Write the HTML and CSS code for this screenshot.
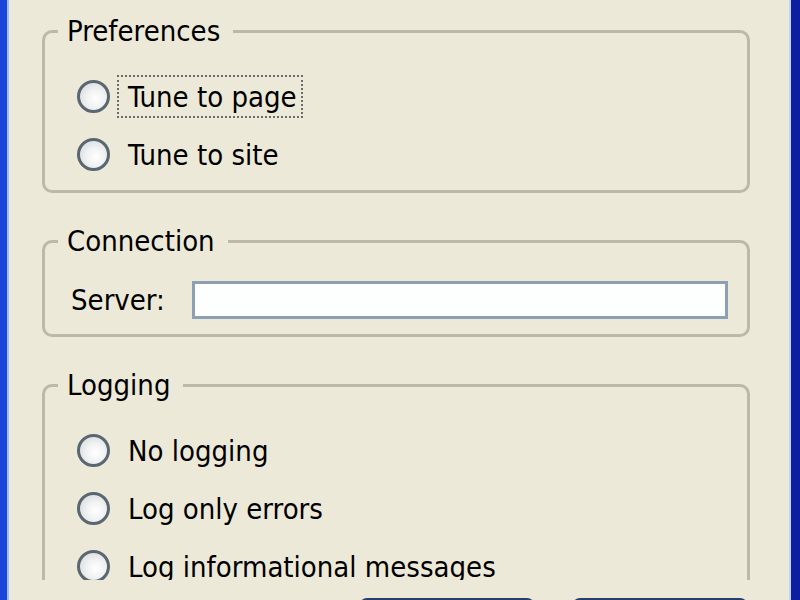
FILE: index.html
```html
<!DOCTYPE html>
<html lang="en">
<head>
  <meta charset="UTF-8" />
  <title>Options</title>
  <link rel="stylesheet" href="styles.css">
</head>
<body>
  <div class="window">
    <div class="frame">
      <div class="scroll">

        <fieldset class="group">
          <legend>Preferences</legend>
          <label class="option">
            <input type="radio" name="tune" class="radio">
            <span class="caption focused">Tune to page</span>
          </label>
          <label class="option">
            <input type="radio" name="tune" class="radio">
            <span class="caption">Tune to site</span>
          </label>
        </fieldset>

        <fieldset class="group connection">
          <legend>Connection</legend>
          <div class="field-row">
            <label class="field-label" for="server">Server:</label>
            <input type="text" id="server" class="field">
          </div>
        </fieldset>

        <fieldset class="group">
          <legend>Logging</legend>
          <label class="option">
            <input type="radio" name="log" class="radio">
            <span class="caption">No logging</span>
          </label>
          <label class="option">
            <input type="radio" name="log" class="radio">
            <span class="caption">Log only errors</span>
          </label>
          <label class="option">
            <input type="radio" name="log" class="radio">
            <span class="caption">Log informational messages</span>
          </label>
        </fieldset>

      </div>

      <!-- dialog buttons, mostly below the fold -->
      <div class="footer">
        <div class="button"></div>
        <div class="button"></div>
      </div>
    </div>
  </div>
</body>
</html>
```

FILE: styles.css
```css
html, body {
  margin: 0;
  height: 100%;
  overflow: hidden;
}
body {
  font-family: "DejaVu Sans Condensed", "DejaVu Sans", sans-serif;
  font-size: 29px;
  color: #000;
  background: #ece9d8;
}
.window {
  height: 100%;
  border-left: 7px solid #1a45d6;
  border-right: 9px solid #0c1fa0;
}
.frame {
  height: 100%;
  border-left: 2px solid #9dc0f2;
  border-right: 2px solid #bcd3f6;
  background: #ece9d8;
}
.scroll {
  height: 580px;
  overflow: hidden;
  padding-top: 15px;
  box-sizing: border-box;
}
.group {
  margin: 0 39px 32px 33px;
  padding: 20px 19px 7px 13px;
  border: 3px solid #bcb9a7;
  border-radius: 10px;
}
.group legend {
  padding: 0 13px 0 9px;
  line-height: 32px;
}
.option {
  display: flex;
  align-items: center;
  height: 58px;
  padding-left: 19px;
}
.radio {
  appearance: none;
  width: 33px;
  height: 33px;
  margin: 0;
  border: 3px solid #5a6670;
  border-radius: 50%;
  background: radial-gradient(circle at 58% 58%, #ffffff 0%, #f1f2f3 40%, #cfd2d6 100%);
  box-sizing: border-box;
}
.caption {
  margin-left: 7px;
  padding: 4px 4px 3px 9px;
  line-height: 32px;
  border: 2px dotted transparent;
}
.caption.focused {
  border-color: #6b6b6b;
}
.connection {
  padding-top: 22px;
  padding-bottom: 13px;
}
.field-row {
  display: flex;
  align-items: center;
  height: 42px;
}
.field-label {
  flex: 0 0 134px;
  padding-left: 13px;
  box-sizing: border-box;
}
.field {
  flex: 1;
  height: 38px;
  margin: 0;
  border: 3px solid #8da0b3;
  background: #fdfefe;
  box-sizing: border-box;
}
.footer {
  display: flex;
  justify-content: flex-end;
  gap: 37px;
  padding: 18px 41px 0 0;
}
.button {
  width: 176px;
  height: 46px;
  border: 3px solid #23406e;
  border-radius: 8px;
  background: linear-gradient(#ffffff, #ecebe6);
  box-sizing: border-box;
}
```
